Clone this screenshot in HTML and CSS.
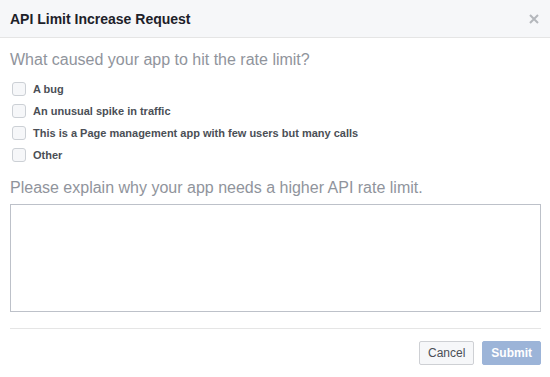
FILE: index.html
```html
<!DOCTYPE html>
<html lang="en">
<head>
    <meta charset="UTF-8">
    <title>API Limit Increase Request</title>
    <link rel="stylesheet" href="styles.css">
</head>
<body>
    <div class="dialog">
        <div class="header">
            <h2>API Limit Increase Request</h2>
            <svg class="close" width="10" height="10" viewBox="0 0 10 10">
                <path d="M1 1L9 9M9 1L1 9" stroke="#b4b7bc" stroke-width="2"/>
            </svg>
        </div>
        <div class="content">
            <div class="prompt">What caused your app to hit the rate limit?</div>
            <div class="options">
                <label class="option"><span class="box"></span>A bug</label>
                <label class="option"><span class="box"></span>An unusual spike in traffic</label>
                <label class="option"><span class="box"></span>This is a Page management app with few users but many calls</label>
                <label class="option"><span class="box"></span>Other</label>
            </div>
            <div class="prompt second">Please explain why your app needs a higher API rate limit.</div>
            <textarea class="explain"></textarea>
        </div>
        <div class="footer">
            <button class="btn cancel">Cancel</button>
            <button class="btn submit">Submit</button>
        </div>
    </div>
</body>
</html>
```
FILE: styles.css
```css
body {
    margin: 0;
    font-family: "Liberation Sans", Arial, sans-serif;
    background: #fff;
}
.dialog {
    width: 550px;
}
.header {
    background: #f6f7f9;
    border-bottom: 1px solid #e5e5e5;
    height: 37px;
    display: flex;
    align-items: center;
    justify-content: space-between;
    padding: 0 11px 0 10px;
}
h2 {
    margin: 0;
    font-size: 14px;
    font-weight: bold;
    color: #1d2129;
}
.content {
    padding: 12px 10px 0 10px;
}
.prompt {
    font-size: 16px;
    color: #90949c;
    line-height: 20px;
}
.options {
    margin-top: 8px;
    display: flex;
    flex-direction: column;
}
.option {
    display: flex;
    align-items: center;
    height: 22px;
    font-size: 11px;
    font-weight: bold;
    color: #4b4f56;
}
.box {
    width: 12px;
    height: 12px;
    border: 1px solid #ccd0d5;
    border-radius: 3px;
    background: #f6f7f9;
    margin: 0 7px 0 2px;
}
.second {
    margin-top: 12px;
}
.explain {
    display: block;
    box-sizing: border-box;
    width: 531px;
    height: 108px;
    margin-top: 6px;
    border: 1px solid #bdc1c9;
    resize: none;
}
.footer {
    margin: 16px 9px 0 10px;
    border-top: 1px solid #e5e5e5;
    padding-top: 12px;
    display: flex;
    justify-content: flex-end;
    gap: 8px;
}
.btn {
    font-family: inherit;
    font-size: 12px;
    height: 24px;
    padding: 0 8px;
    border-radius: 2px;
}
.cancel {
    background: #f6f7f9;
    border: 1px solid #ced0d4;
    color: #4b4f56;
}
.submit {
    font-weight: bold;
    background: #9cb4d8;
    border: 1px solid #9cb4d8;
    color: #fff;
}
```
